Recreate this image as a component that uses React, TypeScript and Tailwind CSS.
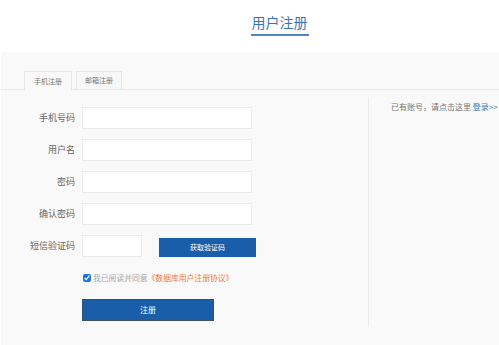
const fields = ['手机号码', '用户名', '密码', '确认密码'];

const App = () => {
    return (
        <div className="h-[345px] w-[499px] overflow-hidden bg-white" style={{ fontFamily: '"Noto Sans CJK SC", "Noto Sans", sans-serif' }}>
            <div className="h-[52px] flex justify-center pl-[60px]">
                <div className="mt-[13px] h-[23px] border-b-2 border-[#4a86c8] text-[14px] leading-[18px] text-[#3a74b8] px-[1px]">用户注册</div>
            </div>
            <div className="ml-px h-[293px] bg-[#f9f9f9]">
                <div className="pt-[19px] pl-[23px] flex gap-[4px] border-b border-[#e9e9e9]">
                    <div className="w-[48px] h-[19px] -mb-px border border-b-0 border-[#e6e6e6] bg-[#f9f9f9] flex items-center justify-center text-[7px] text-[#777]">手机注册</div>
                    <div className="w-[46px] h-[18px] border border-b-0 border-[#e6e6e6] bg-[#f7f7f7] flex items-center justify-center text-[7px] text-[#777]">邮箱注册</div>
                </div>
                <div className="flex">
                    <div className="w-[368px] mt-[7px] h-[230px] border-r border-[#ececec] pt-[10px]">
                        <div className="flex flex-col gap-[10px]">
                            {fields.map((f) => (
                                <div key={f} className="flex items-center h-[22px]">
                                    <label className="w-[74px] text-right text-[9px] text-[#666]">{f}</label>
                                    <input className="ml-[7px] w-[170px] h-[22px] bg-white border border-[#ebebeb] outline-none" />
                                </div>
                            ))}
                            <div className="flex items-center h-[22px]">
                                <label className="w-[74px] text-right text-[9px] text-[#666]">短信验证码</label>
                                <input className="ml-[7px] w-[60px] h-[22px] bg-white border border-[#ebebeb] outline-none" />
                                <button className="ml-[17px] w-[97px] h-[19px] bg-[#1a5da8] text-white text-[7px] mt-[3px]">获取验证码</button>
                            </div>
                        </div>
                        <div className="flex items-center mt-[16px] ml-[82px] h-[10px]">
                            <input type="checkbox" defaultChecked className="w-[8px] h-[8px] m-0 accent-[#1a73e8]" />
                            <span className="ml-[2px] text-[7.8px] text-[#aaa]">我已阅读并同意</span>
                            <span className="text-[7.8px] text-[#f07a3c]">《数据库用户注册协议》</span>
                        </div>
                        <button className="mt-[16px] ml-[81px] w-[132px] h-[22px] bg-[#1a5da8] border border-[#3d4f63] text-white text-[8px]">注册</button>
                    </div>
                    <div className="pl-[22px] pt-[11px] text-[8px] whitespace-nowrap text-[#777]">
                        已有账号，请点击这里 <span className="text-[#3a7ac0]">登录&gt;&gt;</span>
                    </div>
                </div>
            </div>
        </div>
    );
};

export default App;
